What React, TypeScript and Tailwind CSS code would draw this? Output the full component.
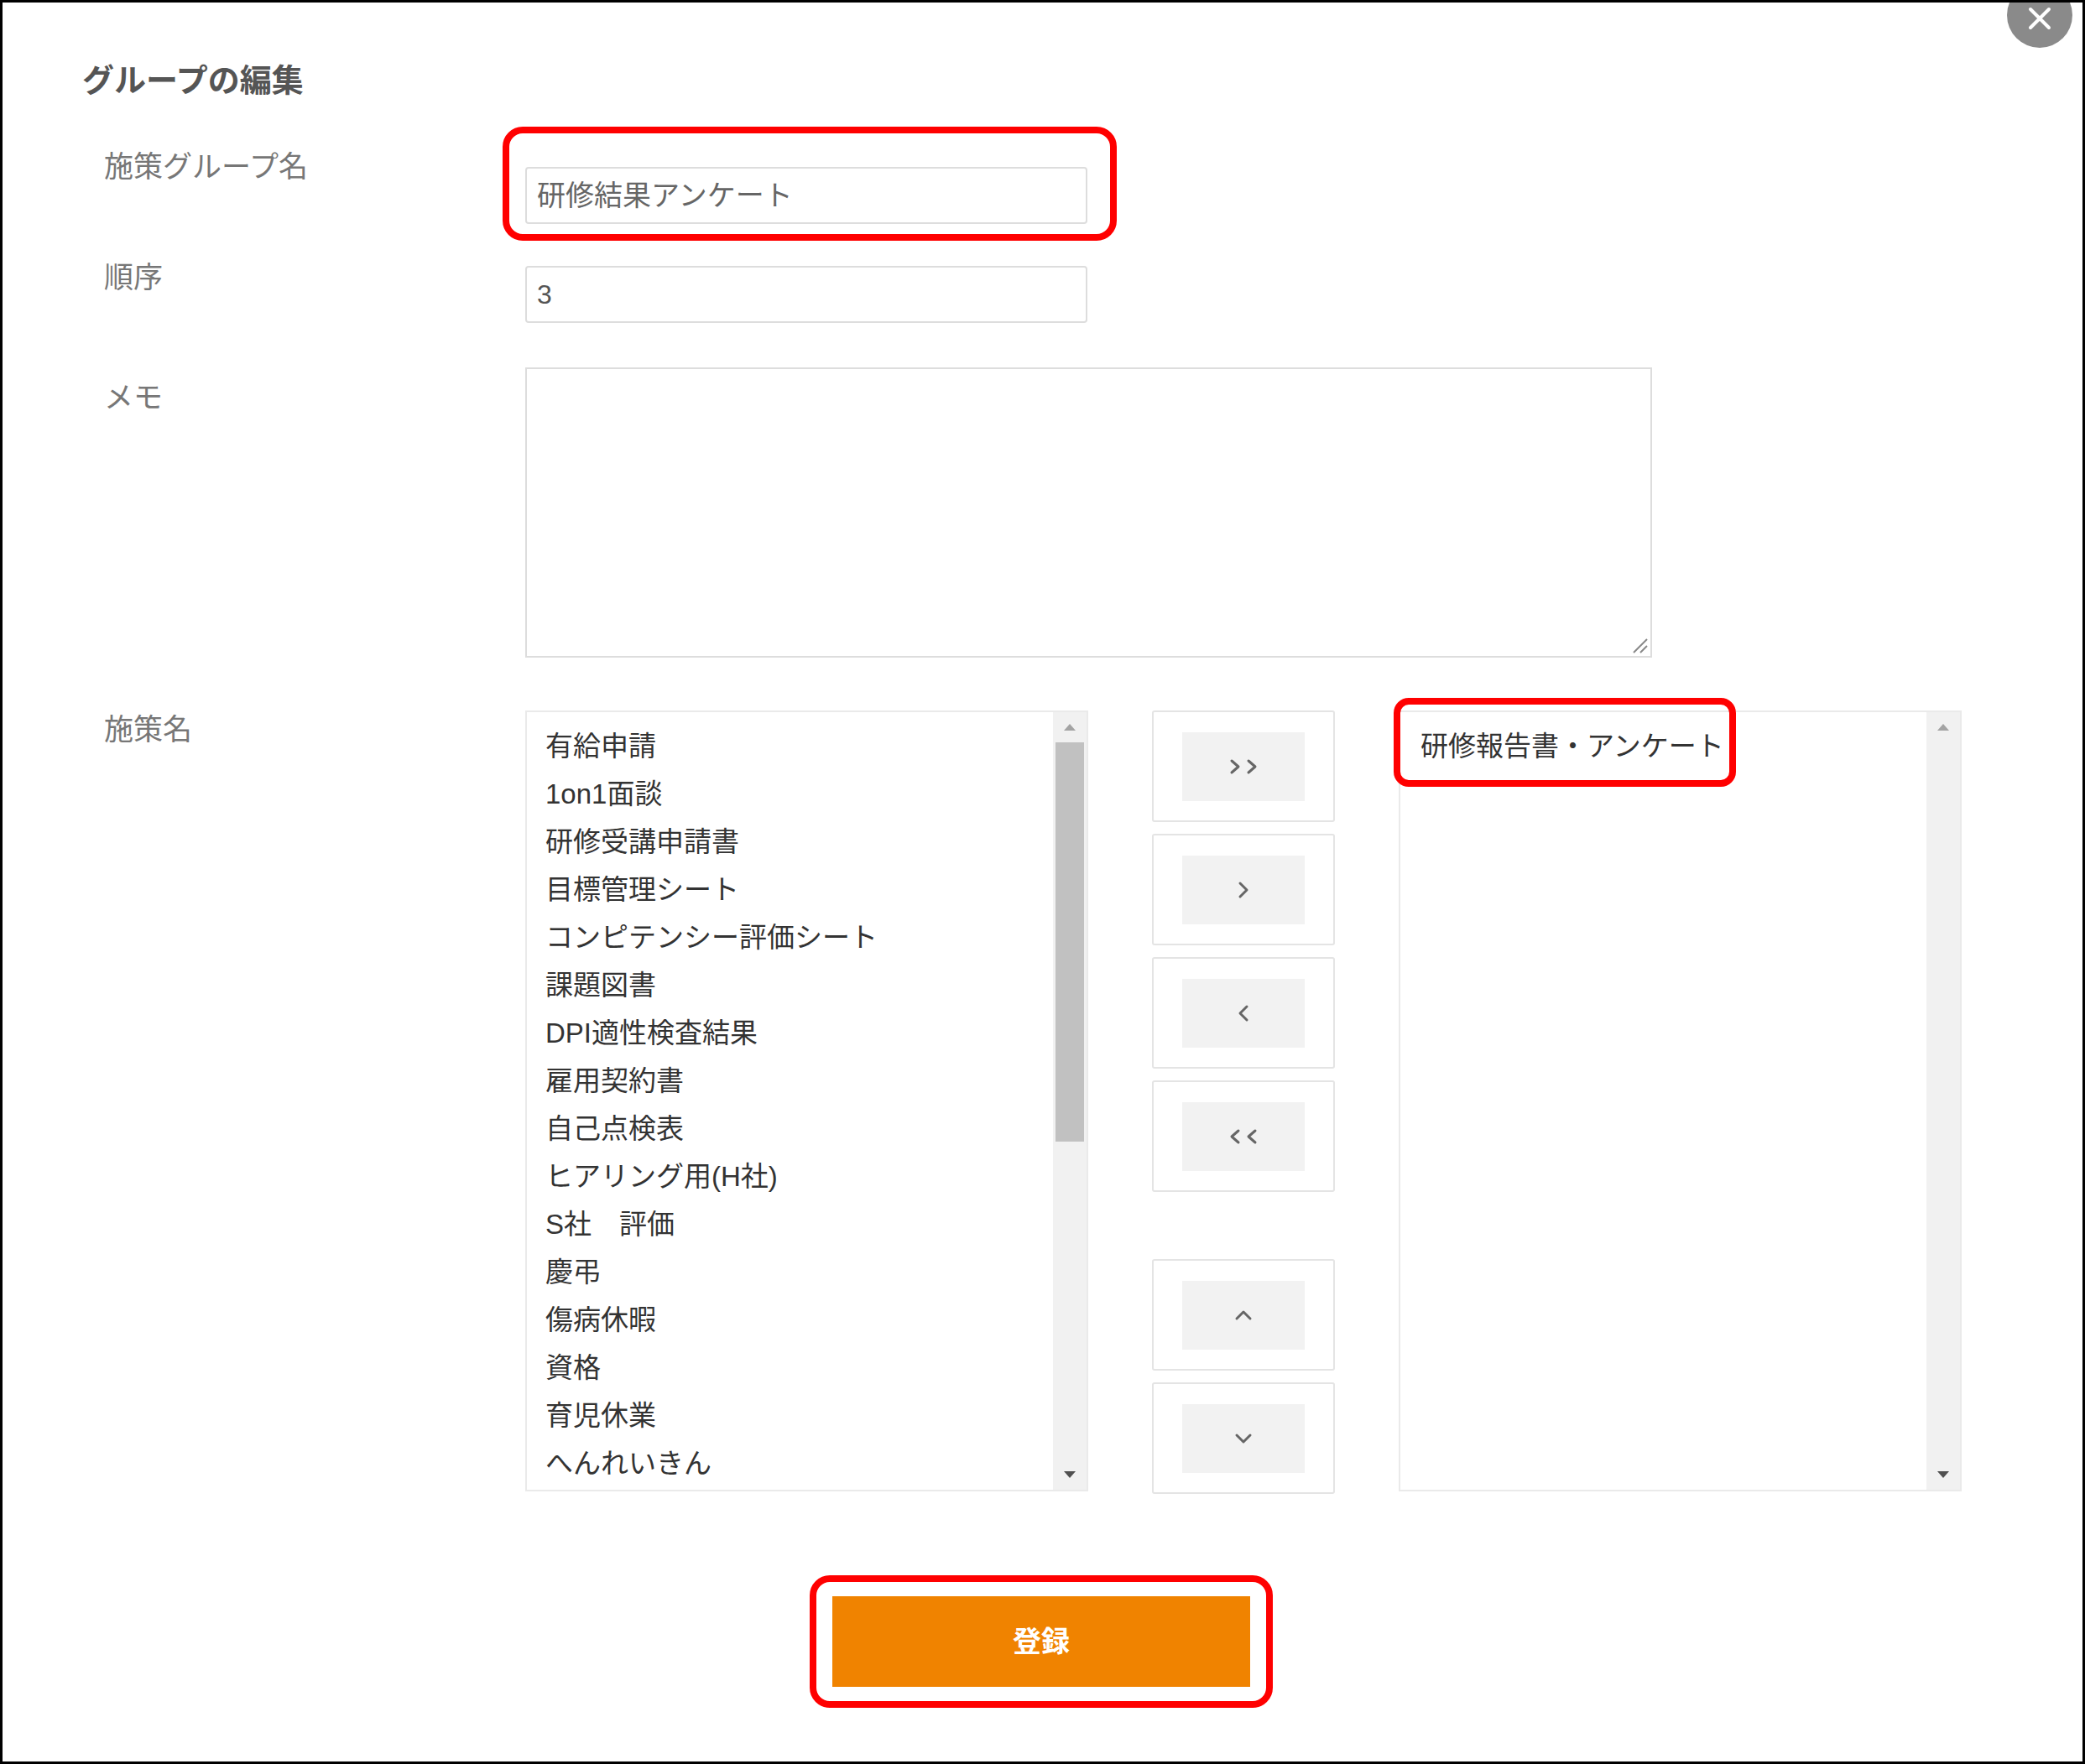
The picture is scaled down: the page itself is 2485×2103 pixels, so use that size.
import React from "react";

const font = { fontFamily: '"Liberation Sans", "Noto Sans CJK JP", sans-serif' };

const items = [
  "有給申請", "1on1面談", "研修受講申請書", "目標管理シート", "コンピテンシー評価シート", "課題図書",
  "DPI適性検査結果", "雇用契約書", "自己点検表", "ヒアリング用(H社)", "S社　評価", "慶弔",
  "傷病休暇", "資格", "育児休業", "へんれいきん",
];

function Chevron({ d }: { d: string }) {
  return (
    <svg width="48" height="30" viewBox="0 0 48 30" fill="none" stroke="#666" strokeWidth="3" strokeLinecap="round" strokeLinejoin="round">
      <path d={d} />
    </svg>
  );
}

function MoveButton({ d }: { d: string }) {
  return (
    <div className="h-[133px] w-[218px] border-2 border-[#e4e4e4] rounded-[3px] bg-white flex items-center justify-center">
      <div className="w-[146px] h-[82px] bg-[#f2f2f2] flex items-center justify-center">
        <Chevron d={d} />
      </div>
    </div>
  );
}

function ScrollTrack({ thumb }: { thumb: boolean }) {
  return (
    <div className="w-[40px] bg-[#f1f1f1] flex flex-col items-center py-[14px]">
      <div className="w-0 h-0 border-l-[7px] border-r-[7px] border-b-[8px] border-l-transparent border-r-transparent border-b-[#a3a3a3]" />
      <div className="flex-1 w-full pt-[14px]">
        {thumb && <div className="mx-auto w-[34px] h-[476px] bg-[#c1c1c1]" />}
      </div>
      <div className="w-0 h-0 border-l-[7px] border-r-[7px] border-t-[8px] border-l-transparent border-r-transparent border-t-[#505050]" />
    </div>
  );
}

export default function App() {
  return (
    <div className="w-[2485px] h-[2103px] bg-white border-[3px] border-black relative overflow-hidden" style={font}>
      <div className="absolute right-[12px] top-[-24px] w-[78px] h-[78px] rounded-full bg-[#8a8a8a] flex items-end justify-center pb-[20px]">
        <svg width="30" height="30" viewBox="0 0 30 30" stroke="white" strokeWidth="4" strokeLinecap="round">
          <path d="M4 4 L26 26 M26 4 L4 26" />
        </svg>
      </div>

      <div className="pl-[95px] pt-[74px]">
        <h1 className="text-[38px] font-bold text-[#555] leading-none">グループの編集</h1>

        <div className="mt-[36px] pl-[26px] grid grid-cols-[502px_1fr] text-[35px] text-[#777]">
          <div className="pt-[22px]">施策グループ名</div>
          <div className="pt-[48px] relative">
            <div className="absolute left-[-27px] top-[0px] w-[732px] h-[136px] border-[8px] border-[#f00] rounded-[24px]" />
            <div className="w-[670px] h-[68px] border-2 border-[#ddd] rounded-[4px] px-[12px] flex items-center text-[34px] text-[#666]">研修結果アンケート</div>
          </div>

          <div className="pt-[38px]">順序</div>
          <div className="pt-[50px]">
            <div className="w-[670px] h-[68px] border-2 border-[#ddd] rounded-[4px] px-[12px] flex items-center text-[32px] text-[#555]">3</div>
          </div>

          <div className="pt-[63px]">メモ</div>
          <div className="pt-[53px]">
            <div className="w-[1343px] h-[346px] border-2 border-[#ddd] relative">
              <svg className="absolute right-[2px] bottom-[2px]" width="24" height="24" viewBox="0 0 24 24" stroke="#888" strokeWidth="2">
                <path d="M22 6 L6 22 M22 14 L14 22" />
              </svg>
            </div>
          </div>

          <div className="pt-[60px]">施策名</div>
          <div className="pt-[63px] flex gap-[76px]">
            <div className="w-[671px] h-[931px] border-2 border-[#eaeaea] flex">
              <div className="flex-1 pl-[22px] pt-[12px] text-[33px] text-[#333] leading-[57px]">
                {items.map((t) => (
                  <div key={t}>{t}</div>
                ))}
              </div>
              <ScrollTrack thumb />
            </div>

            <div className="flex flex-col gap-[14px] w-[218px]">
              <MoveButton d="M10 8 L18 15 L10 22 M30 8 L38 15 L30 22" />
              <MoveButton d="M20 7 L28 15 L20 23" />
              <MoveButton d="M28 7 L20 15 L28 23" />
              <MoveButton d="M18 8 L10 15 L18 22 M38 8 L30 15 L38 22" />
              <div className="h-[52px]" />
              <MoveButton d="M16 19 L24 11 L32 19" />
              <MoveButton d="M16 11 L24 19 L32 11" />
            </div>

            <div className="relative w-[671px] h-[931px] border-2 border-[#eaeaea] flex">
              <div className="absolute left-[-8px] top-[-17px] w-[408px] h-[106px] border-[8px] border-[#f00] rounded-[18px]" />
              <div className="flex-1 pl-[24px] pt-[12px] text-[33px] text-[#333] leading-[57px]">研修報告書・アンケート</div>
              <ScrollTrack thumb={false} />
            </div>
          </div>
        </div>

        <div className="pl-[867px] pt-[97px]">
          <div className="w-[552px] h-[158px] border-[8px] border-[#f00] rounded-[24px] flex items-center justify-center">
            <div className="w-[498px] h-[108px] bg-[#f08300] flex items-center justify-center text-white text-[34px] font-bold">登録</div>
          </div>
        </div>
      </div>
    </div>
  );
}
